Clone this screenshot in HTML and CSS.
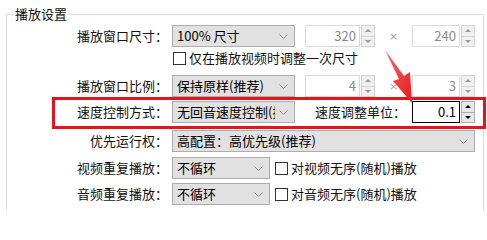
FILE: index.html
```html
<!DOCTYPE html>
<html lang="zh-CN">
<head>
<meta charset="utf-8">
<title>播放设置</title>
<link rel="stylesheet" href="styles.css">
</head>
<body>
<div class="page">
  <fieldset class="group">
    <legend class="group-title">播放设置</legend>

    <div class="row r1">
      <span class="label">播放窗口尺寸：</span>
      <div class="combo combo-md"><span class="combo-text">100% 尺寸</span><svg class="chev" width="9" height="5" viewBox="0 0 9 5"><polyline points="0.5,0.5 4.5,4.5 8.5,0.5"/></svg></div>
      <div class="spin spin-a"><span class="spin-field">320</span><span class="spin-btns"><span class="sb up"></span><span class="sb down"></span></span></div>
      <span class="times">×</span>
      <div class="spin spin-b"><span class="spin-field">240</span><span class="spin-btns"><span class="sb up"></span><span class="sb down"></span></span></div>
    </div>

    <div class="row r2">
      <span class="label"></span>
      <span class="check"></span><span class="check-text">仅在播放视频时调整一次尺寸</span>
    </div>

    <div class="row r3">
      <span class="label">播放窗口比例：</span>
      <div class="combo combo-md"><span class="combo-text">保持原样(推荐)</span><svg class="chev" width="9" height="5" viewBox="0 0 9 5"><polyline points="0.5,0.5 4.5,4.5 8.5,0.5"/></svg></div>
      <div class="spin spin-a"><span class="spin-field">4</span><span class="spin-btns"><span class="sb up"></span><span class="sb down"></span></span></div>
      <span class="times">×</span>
      <div class="spin spin-b"><span class="spin-field">3</span><span class="spin-btns"><span class="sb up"></span><span class="sb down"></span></span></div>
    </div>

    <div class="row r4">
      <span class="label">速度控制方式：</span>
      <div class="combo combo-md"><span class="combo-text">无回音速度控制(推荐)</span><svg class="chev" width="9" height="5" viewBox="0 0 9 5"><polyline points="0.5,0.5 4.5,4.5 8.5,0.5"/></svg></div>
      <span class="label-inline">速度调整单位：</span>
      <div class="spin spin-b active"><span class="spin-field">0.1</span><span class="spin-btns"><span class="sb up"></span><span class="sb down"></span></span></div>
    </div>

    <div class="row r5">
      <span class="label">优先运行权：</span>
      <div class="combo combo-wide"><span class="combo-text">高配置：高优先级(推荐)</span><svg class="chev" width="9" height="5" viewBox="0 0 9 5"><polyline points="0.5,0.5 4.5,4.5 8.5,0.5"/></svg></div>
    </div>

    <div class="row r6">
      <span class="label">视频重复播放：</span>
      <div class="combo combo-sm"><span class="combo-text">不循环</span><svg class="chev" width="9" height="5" viewBox="0 0 9 5"><polyline points="0.5,0.5 4.5,4.5 8.5,0.5"/></svg></div>
      <span class="check check-after"></span><span class="check-text">对视频无序(随机)播放</span>
    </div>

    <div class="row r7">
      <span class="label">音频重复播放：</span>
      <div class="combo combo-sm"><span class="combo-text">不循环</span><svg class="chev" width="9" height="5" viewBox="0 0 9 5"><polyline points="0.5,0.5 4.5,4.5 8.5,0.5"/></svg></div>
      <span class="check check-after"></span><span class="check-text">对音频无序(随机)播放</span>
    </div>
  </fieldset>

  <div class="highlight"></div>
  <svg class="arrow" width="40" height="62" viewBox="380 45 40 62">
    <defs>
      <linearGradient id="ag" x1="0" y1="0" x2="1" y2="1">
        <stop offset="0" stop-color="#f76a6a"/>
        <stop offset="1" stop-color="#e8191c"/>
      </linearGradient>
    </defs>
    <polygon points="385,50 404,76 410,72 412,103 393,81 399,79" fill="url(#ag)"/>
  </svg>
</div>
</body>
</html>
```

FILE: styles.css
```css
html, body {
  margin: 0;
  padding: 0;
  background: #ffffff;
}

body {
  font-family: "Noto Sans CJK SC", "Microsoft YaHei", sans-serif;
  font-size: 13px;
  color: #111;
}

.page {
  position: relative;
  width: 487px;
  height: 210px;
  overflow: hidden;
}

.group {
  box-sizing: border-box;
  width: 478px;
  margin: 5px 0 0 6px;
  padding: 0 0 40px 0;
  border: 1px solid #dcdcdc;
  border-bottom: none;
  min-width: 0;
}

.group-title {
  margin-left: 6px;
  padding: 0 2px;
  line-height: 18px;
  height: 18px;
}

.row {
  display: flex;
  align-items: center;
  height: 22px;
}

.r1 { margin-top: 2px; }
.r2 { margin-top: 0; }
.r3 { margin-top: 6px; }
.r4 { margin-top: 4px; }
.r5 { margin-top: 7px; }
.r6 { margin-top: 5px; }
.r7 { margin-top: 4px; }

.label {
  flex: none;
  width: 161px;
  margin-right: 4px;
  text-align: right;
  white-space: nowrap;
  line-height: 22px;
}

.label-inline {
  flex: none;
  margin-left: 20px;
  width: 91px;
  margin-right: 6px;
  white-space: nowrap;
  line-height: 22px;
}

.combo {
  box-sizing: border-box;
  flex: none;
  display: flex;
  align-items: center;
  height: 22px;
  background: #e1e1e1;
  border: 1px solid #adadad;
  padding: 0 6px 0 4px;
}

.combo-md { width: 123px; }
.combo-wide { width: 303px; }
.combo-sm { width: 98px; }

.combo-text {
  flex: 1;
  min-width: 0;
  overflow: hidden;
  white-space: nowrap;
  line-height: 20px;
  color: #000;
}

.chev {
  flex: none;
  margin-left: 4px;
}

.chev polyline {
  fill: none;
  stroke: #8c8c8c;
  stroke-width: 1;
}

.spin {
  box-sizing: border-box;
  flex: none;
  display: flex;
  height: 22px;
}

.spin-a { width: 70px; margin-left: 10px; }
.spin-b { width: 63px; }

.spin-field {
  box-sizing: border-box;
  flex: 1;
  border: 1px solid #d9d9d9;
  background: #fff;
  color: #8a8a8a;
  text-align: right;
  padding-right: 3px;
  line-height: 20px;
}

.spin-btns {
  flex: none;
  width: 14px;
  margin-left: 1px;
  display: flex;
  flex-direction: column;
}

.sb {
  box-sizing: border-box;
  flex: 1;
  position: relative;
  background: #f0f0f0;
  border: 1px solid #d4d4d4;
}

.sb.down { border-top: none; }

.sb::after {
  content: "";
  position: absolute;
  left: 50%;
  top: 50%;
  width: 0;
  height: 0;
  margin-left: -3px;
  border-left: 3px solid transparent;
  border-right: 3px solid transparent;
}

.sb.up::after {
  margin-top: -2px;
  border-bottom: 3px solid #9a9a9a;
}

.sb.down::after {
  margin-top: -1px;
  border-top: 3px solid #9a9a9a;
}

.active .spin-field {
  border-color: #000;
  color: #000;
}

.active .sb {
  border-color: #adadad;
  background: #e8e8e8;
}

.active .sb.up::after { border-bottom-color: #000; }
.active .sb.down::after { border-top-color: #000; }

.times {
  flex: none;
  width: 37px;
  text-align: center;
  color: #a8a8a8;
  font-size: 11px;
  font-family: "DejaVu Sans", sans-serif;
}

.check {
  box-sizing: border-box;
  flex: none;
  width: 13px;
  height: 13px;
  border: 1px solid #333;
  background: #fff;
  margin-left: 1px;
}

.check-after { margin-left: 5px; }

.check-text {
  margin-left: 3px;
  white-space: nowrap;
  line-height: 22px;
}

.highlight {
  position: absolute;
  left: 52px;
  top: 97px;
  width: 434px;
  height: 32px;
  box-sizing: border-box;
  border: 3px solid #e3141b;
}

.arrow {
  position: absolute;
  left: 380px;
  top: 45px;
}
```
